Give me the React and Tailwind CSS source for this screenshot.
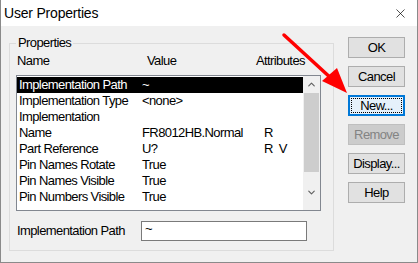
import { X, ChevronUp, ChevronDown } from "lucide-react";

const rows = [
  { name: "Implementation Path", value: "~", attr: "", selected: true },
  { name: "Implementation Type", value: "<none>", attr: "" },
  { name: "Implementation", value: "", attr: "" },
  { name: "Name", value: "FR8012HB.Normal", attr: "R" },
  { name: "Part Reference", value: "U?", attr: "R  V" },
  { name: "Pin Names Rotate", value: "True", attr: "" },
  { name: "Pin Names Visible", value: "True", attr: "" },
  { name: "Pin Numbers Visible", value: "True", attr: "" },
];

function Button({ label, variant }) {
  if (variant === "focus") {
    return (
      <div className="h-[21px] w-[57px] border-2 border-[#0078d7] bg-[#e5f1fb] p-[1px]">
        <div className="flex h-full w-full items-center justify-center border border-dotted border-black">
          {label}
        </div>
      </div>
    );
  }
  if (variant === "disabled") {
    return (
      <div className="flex h-[21px] w-[57px] items-center justify-center border border-[#bfbfbf] bg-[#cccccc] text-[#838383]">
        {label}
      </div>
    );
  }
  return (
    <div className="flex h-[21px] w-[57px] items-center justify-center border border-[#adadad] bg-[#e1e1e1]">
      {label}
    </div>
  );
}

export default function App() {
  return (
    <div className="relative flex h-[263px] w-[418px] flex-col border-x border-b border-[#8a8a8a] bg-[#f0f0f0] font-['Liberation_Sans',Arial,sans-serif] text-[13px] tracking-[-0.6px] text-black">
      <div className="flex h-[26px] items-center justify-between bg-white pl-[3px] pr-[9px]">
        <span className="text-[14px] tracking-[-0.2px]">User Properties</span>
        <X size={15} strokeWidth={1.1} />
      </div>

      <div className="flex flex-1 pl-[8px] pt-[11px]">
        <div className="relative mt-[6px] h-[208px] w-[325px] border border-[#dcdcdc] px-[6px]">
          <span className="absolute left-[6px] top-[-8px] bg-[#f0f0f0] px-[2px] leading-[14px]">
            Properties
          </span>
          <div className="flex h-[31px] items-center pl-[1px] pt-[3px]">
            <span className="w-[130px]">Name</span>
            <span className="w-[109px]">Value</span>
            <span>Attributes</span>
          </div>
          <div className="flex h-[136px] w-[305px] border border-[#828790] bg-white">
            <div className="flex-1 pt-[1px]">
              {rows.map((r) => (
                <div
                  key={r.name}
                  className={`flex h-[16px] items-center pl-[2px] ${r.selected ? "bg-black text-white" : ""}`}
                >
                  <span className="w-[123px] whitespace-nowrap">{r.name}</span>
                  <span className="w-[122px] whitespace-nowrap">{r.value}</span>
                  <span className="whitespace-pre">{r.attr}</span>
                </div>
              ))}
            </div>
            <div className="flex w-[17px] flex-col bg-[#f0f0f0]">
              <div className="flex h-[17px] items-center justify-center text-[#606060]">
                <ChevronUp size={11} strokeWidth={2.5} />
              </div>
              <div className="mx-[1px] h-[79px] bg-[#cdcdcd]" />
              <div className="flex flex-1 items-center justify-center pt-[2px] text-[#606060]">
                <ChevronDown size={11} strokeWidth={2.5} />
              </div>
            </div>
          </div>
          <div className="mt-[10px] flex items-center">
            <span className="w-[125px] pl-[1px]">Implementation Path</span>
            <div className="h-[20px] w-[166px] border border-[#7a7a7a] bg-white pl-[3px] leading-[14px]">
              ~
            </div>
          </div>
        </div>

        <div className="ml-[14px] flex flex-col gap-[8px]">
          <Button label="OK" />
          <Button label="Cancel" />
          <Button label="New..." variant="focus" />
          <Button label="Remove" variant="disabled" />
          <Button label="Display..." />
          <Button label="Help" />
        </div>
      </div>

      <svg className="pointer-events-none absolute left-0 top-0" width="418" height="263">
        <line x1="283" y1="35" x2="332" y2="80" stroke="#ff0000" strokeWidth="3.5" strokeLinecap="round" />
        <polygon points="346,93 321,81 336,68" fill="#ff0000" />
      </svg>
    </div>
  );
}
